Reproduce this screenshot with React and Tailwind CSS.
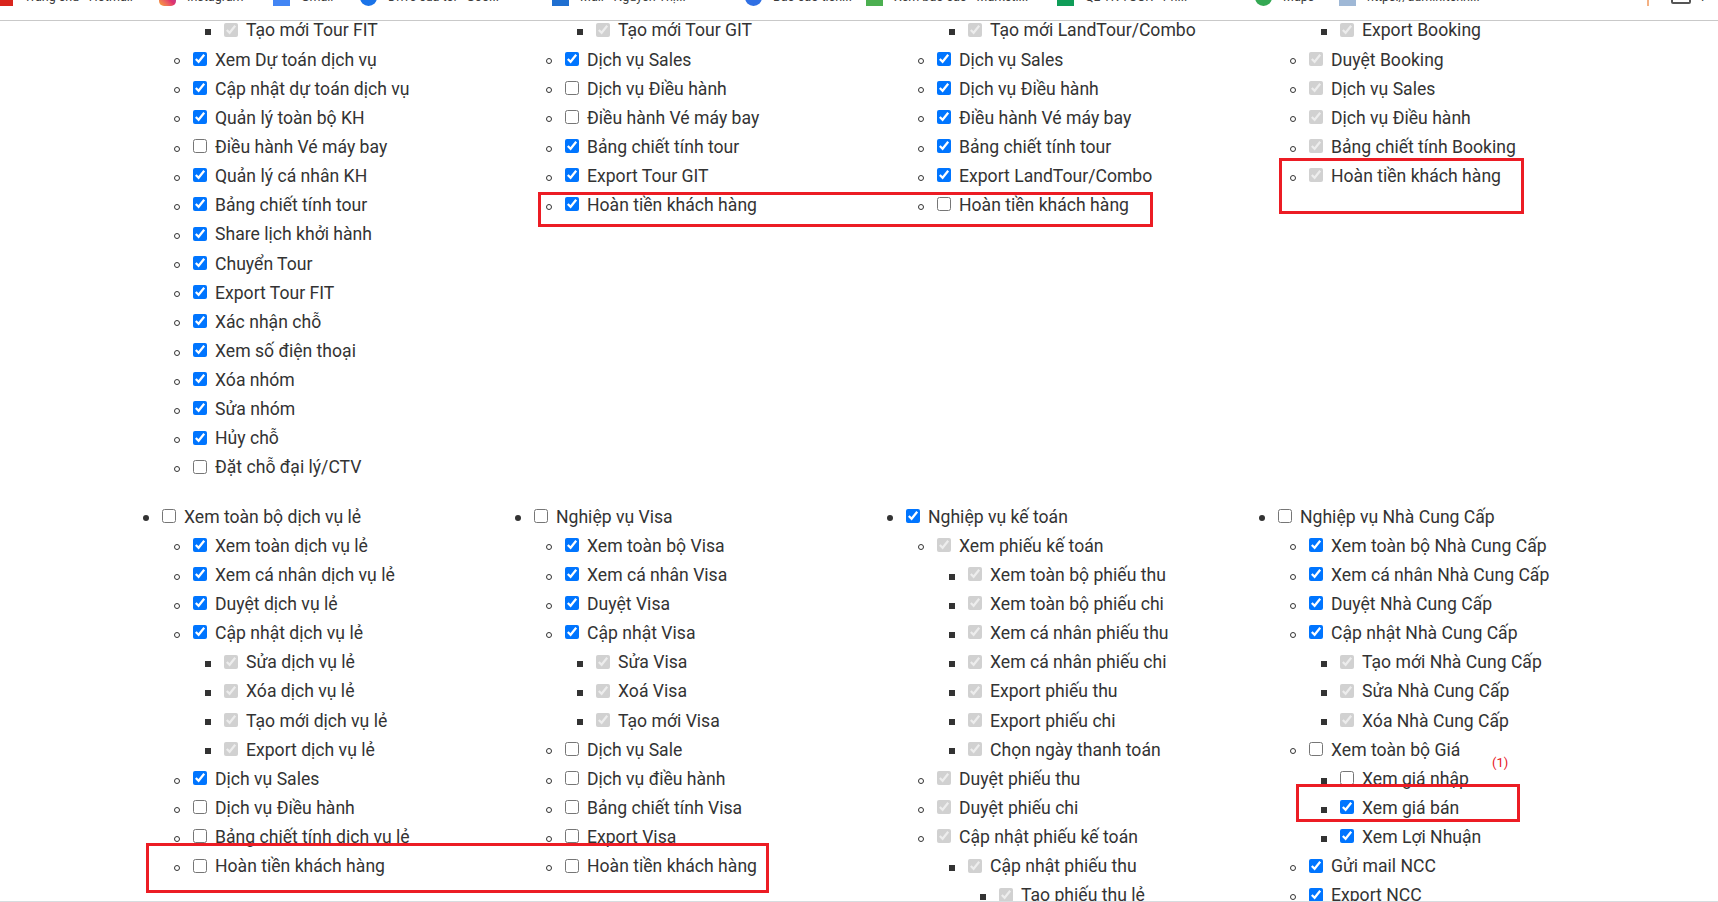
const bookmarks = [
  { w: 'w-[163px]', icon: 'bg-[#d9251d]', label: 'Trang chủ - Hotmail', lead: '-ml-[4px]' },
  { w: 'w-[114px]', icon: 'bg-gradient-to-tr from-[#f9a423] via-[#e1306c] to-[#833ab4] rounded-[5px]', label: 'Instagram' },
  { w: 'w-[87px]', icon: 'bg-[#4285f4]', label: 'Gmail' },
  { w: 'w-[192px]', icon: 'bg-[#1a73e8] rounded-full', label: 'Drive của tôi - Goo...' },
  { w: 'w-[193px]', icon: 'bg-[#1f6fd1]', label: 'Mail - Nguyễn Thị...' },
  { w: 'w-[121px]', icon: 'bg-[#2f6fe4] rounded-full', label: 'Báo cáo tiền...' },
  { w: 'w-[191px]', icon: 'bg-[#4caf50]', label: 'Xem báo cáo - Marketi...' },
  { w: 'w-[198px]', icon: 'bg-[#0f9d58]', label: 'QL TK TOUR - Ph...' },
  { w: 'w-[84px]', icon: 'bg-[#34a853] rounded-full', label: 'Maps' },
  { w: 'w-[280px]', icon: 'bg-[#9fb8d6]', label: 'https://admin.tcnh...' },
];

const topCols = [
  [
    [3, 'd', 'Tạo mới Tour FIT'],
    [2, 'c', 'Xem Dự toán dịch vụ'],
    [2, 'c', 'Cập nhật dự toán dịch vụ'],
    [2, 'c', 'Quản lý toàn bộ KH'],
    [2, 'u', 'Điều hành Vé máy bay'],
    [2, 'c', 'Quản lý cá nhân KH'],
    [2, 'c', 'Bảng chiết tính tour'],
    [2, 'c', 'Share lịch khởi hành'],
    [2, 'c', 'Chuyển Tour'],
    [2, 'c', 'Export Tour FIT'],
    [2, 'c', 'Xác nhận chỗ'],
    [2, 'c', 'Xem số điện thoại'],
    [2, 'c', 'Xóa nhóm'],
    [2, 'c', 'Sửa nhóm'],
    [2, 'c', 'Hủy chỗ'],
    [2, 'u', 'Đặt chỗ đại lý/CTV'],
  ],
  [
    [3, 'd', 'Tạo mới Tour GIT'],
    [2, 'c', 'Dịch vụ Sales'],
    [2, 'u', 'Dịch vụ Điều hành'],
    [2, 'u', 'Điều hành Vé máy bay'],
    [2, 'c', 'Bảng chiết tính tour'],
    [2, 'c', 'Export Tour GIT'],
    [2, 'c', 'Hoàn tiền khách hàng'],
  ],
  [
    [3, 'd', 'Tạo mới LandTour/Combo'],
    [2, 'c', 'Dịch vụ Sales'],
    [2, 'c', 'Dịch vụ Điều hành'],
    [2, 'c', 'Điều hành Vé máy bay'],
    [2, 'c', 'Bảng chiết tính tour'],
    [2, 'c', 'Export LandTour/Combo'],
    [2, 'u', 'Hoàn tiền khách hàng'],
  ],
  [
    [3, 'd', 'Export Booking'],
    [2, 'd', 'Duyệt Booking'],
    [2, 'd', 'Dịch vụ Sales'],
    [2, 'd', 'Dịch vụ Điều hành'],
    [2, 'd', 'Bảng chiết tính Booking'],
    [2, 'd', 'Hoàn tiền khách hàng'],
  ],
];

const bottomCols = [
  [
    [1, 'u', 'Xem toàn bộ dịch vụ lẻ'],
    [2, 'c', 'Xem toàn dịch vụ lẻ'],
    [2, 'c', 'Xem cá nhân dịch vụ lẻ'],
    [2, 'c', 'Duyệt dịch vụ lẻ'],
    [2, 'c', 'Cập nhật dịch vụ lẻ'],
    [3, 'd', 'Sửa dịch vụ lẻ'],
    [3, 'd', 'Xóa dịch vụ lẻ'],
    [3, 'd', 'Tạo mới dịch vụ lẻ'],
    [3, 'd', 'Export dịch vụ lẻ'],
    [2, 'c', 'Dịch vụ Sales'],
    [2, 'u', 'Dịch vụ Điều hành'],
    [2, 'u', 'Bảng chiết tính dịch vụ lẻ'],
    [2, 'u', 'Hoàn tiền khách hàng'],
  ],
  [
    [1, 'u', 'Nghiệp vụ Visa'],
    [2, 'c', 'Xem toàn bộ Visa'],
    [2, 'c', 'Xem cá nhân Visa'],
    [2, 'c', 'Duyệt Visa'],
    [2, 'c', 'Cập nhật Visa'],
    [3, 'd', 'Sửa Visa'],
    [3, 'd', 'Xoá Visa'],
    [3, 'd', 'Tạo mới Visa'],
    [2, 'u', 'Dịch vụ Sale'],
    [2, 'u', 'Dịch vụ điều hành'],
    [2, 'u', 'Bảng chiết tính Visa'],
    [2, 'u', 'Export Visa'],
    [2, 'u', 'Hoàn tiền khách hàng'],
  ],
  [
    [1, 'c', 'Nghiệp vụ kế toán'],
    [2, 'd', 'Xem phiếu kế toán'],
    [3, 'd', 'Xem toàn bộ phiếu thu'],
    [3, 'd', 'Xem toàn bộ phiếu chi'],
    [3, 'd', 'Xem cá nhân phiếu thu'],
    [3, 'd', 'Xem cá nhân phiếu chi'],
    [3, 'd', 'Export phiếu thu'],
    [3, 'd', 'Export phiếu chi'],
    [3, 'd', 'Chọn ngày thanh toán'],
    [2, 'd', 'Duyệt phiếu thu'],
    [2, 'd', 'Duyệt phiếu chi'],
    [2, 'd', 'Cập nhật phiếu kế toán'],
    [3, 'd', 'Cập nhật phiếu thu'],
    [4, 'd', 'Tạo phiếu thu lẻ'],
  ],
  [
    [1, 'u', 'Nghiệp vụ Nhà Cung Cấp'],
    [2, 'c', 'Xem toàn bộ Nhà Cung Cấp'],
    [2, 'c', 'Xem cá nhân Nhà Cung Cấp'],
    [2, 'c', 'Duyệt Nhà Cung Cấp'],
    [2, 'c', 'Cập nhật Nhà Cung Cấp'],
    [3, 'd', 'Tạo mới Nhà Cung Cấp'],
    [3, 'd', 'Sửa Nhà Cung Cấp'],
    [3, 'd', 'Xóa Nhà Cung Cấp'],
    [2, 'u', 'Xem toàn bộ Giá'],
    [3, 'u', 'Xem giá nhập'],
    [3, 'c', 'Xem giá bán'],
    [3, 'c', 'Xem Lợi Nhuận'],
    [2, 'c', 'Gửi mail NCC'],
    [2, 'c', 'Export NCC'],
  ],
];

const indents = ['pl-0', 'pl-[31px]', 'pl-[62px]', 'pl-[93px]'];

function Marker({ level }) {
  if (level === 1) return <span className="mt-[3px] w-[6px] h-[6px] rounded-full bg-[#333]" />;
  if (level === 2) return <span className="mt-[3px] w-[6px] h-[6px] rounded-full border border-[#333]" />;
  return <span className="mt-[3px] w-[6px] h-[6px] bg-[#333]" />;
}

function Row({ level, state, label }) {
  return (
    <div className={`flex items-center h-[29.15px] ${indents[level - 1]}`}>
      <span className="w-[19px] flex items-center shrink-0">
        <Marker level={level} />
      </span>
      <input
        type="checkbox"
        readOnly
        defaultChecked={state !== 'u'}
        disabled={state === 'd'}
        className="w-[14px] h-[14px] m-0 -mt-[2px] shrink-0"
      />
      <span className="ml-[8px] whitespace-nowrap">{label}</span>
    </div>
  );
}

function Section({ cols }) {
  return (
    <div className="grid grid-cols-[repeat(4,372px)] ml-[143px] items-start">
      {cols.map((rows, i) => (
        <div key={i}>
          {rows.map(([level, state, label], j) => (
            <Row key={j} level={level} state={state} label={label} />
          ))}
        </div>
      ))}
    </div>
  );
}

function BookmarkBar() {
  return (
    <div className="h-[21px] border-b border-[#c9c9c9] overflow-hidden bg-white">
      <div className="flex items-start -mt-[12px] text-[12.5px] text-[#3c3c3c] font-['Roboto',sans-serif]">
        {bookmarks.map((b, i) => (
          <div key={i} className={`flex items-start shrink-0 ${b.w} ${b.lead || ''}`}>
            <span className={`w-[17px] h-[17px] mt-[1px] shrink-0 ${b.icon}`} />
            <span className="ml-[11px] whitespace-nowrap leading-[18px]">{b.label}</span>
          </div>
        ))}
        <div className="flex items-start ml-auto mr-[10px] gap-[22px]">
          <span className="leading-[18px]">»</span>
          <span className="w-[2px] h-[18px] bg-[#f4b183]" />
          <span className="w-[20px] h-[16px] border-2 border-[#555] rounded-[2px]" />
          <span className="leading-[18px] -ml-[12px]">F</span>
        </div>
      </div>
    </div>
  );
}

export default function App() {
  return (
    <div className="relative w-[1718px] h-[902px] overflow-hidden bg-white border-b border-[#d7dcdf] font-['Roboto',sans-serif] text-[17.6px] text-[#333]">
      <BookmarkBar />
      <div className="-mt-[5px]">
        <Section cols={topCols} />
        <div className="h-[20px]" />
        <Section cols={bottomCols} />
      </div>

      <div className="absolute left-[538px] top-[192px] w-[615px] h-[35px] border-[3px] border-[#ec1c24]" />
      <div className="absolute left-[1279px] top-[158px] w-[245px] h-[56px] border-[3px] border-[#ec1c24]" />
      <div className="absolute left-[146px] top-[843px] w-[623px] h-[50px] border-[3px] border-[#ec1c24]" />
      <div className="absolute left-[1296px] top-[784px] w-[224px] h-[38px] border-[3px] border-[#ec1c24]" />
      <span className="absolute left-[1492px] top-[754px] text-[13px] leading-[18px] text-[#e8141c]">(1)</span>
    </div>
  );
}
